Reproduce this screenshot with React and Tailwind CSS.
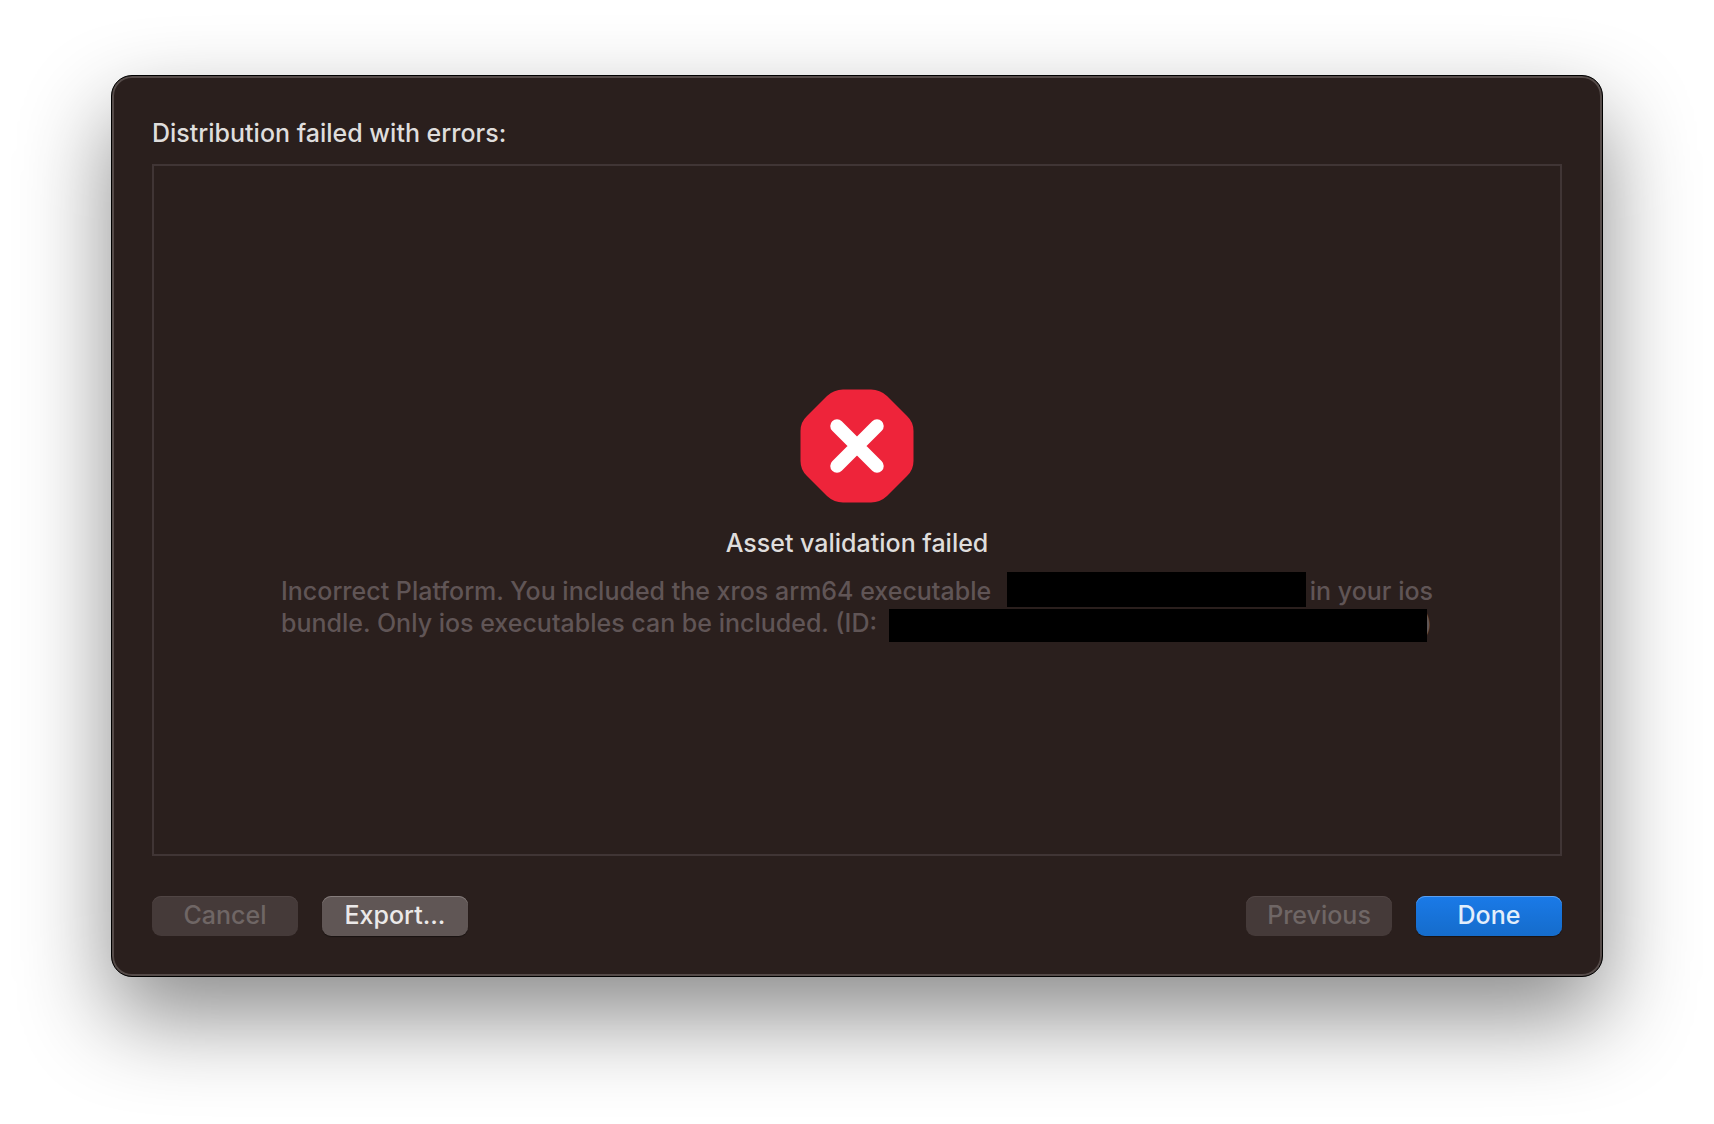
const buttonBase =
  "h-10 w-[146px] rounded-[9px] pb-[3px] text-[25px] leading-8 font-medium text-center";

function ErrorIcon() {
  return (
    <svg
      className="h-[114px] w-[114px]"
      viewBox="0 0 114 114"
      role="img"
      aria-label="Error"
    >
      <path
        fill="#ee243a"
        d="M43 0.500H71Q80 0.500 87 7L107 27Q113.500 33 113.500 42V72Q113.500 81 107 87L87 107Q80 113.500 71 113.500H43Q34 113.500 27 107L7 87Q0.500 81 0.500 72V42Q0.500 33 7 27L27 7Q34 0.500 43 0.500Z"
      />
      <path
        d="M37 37L77 77M77 37L37 77"
        stroke="#fff"
        strokeWidth="13.500"
        strokeLinecap="round"
      />
    </svg>
  );
}

export default function App() {
  return (
    <div className="flex min-h-screen flex-col bg-white px-[111px] pt-[75px] pb-[147px] font-['Inter','Liberation_Sans',sans-serif] text-[25px] leading-8 font-medium text-[#dfdddc]">
      <main className="flex flex-1 flex-col rounded-[21px] border border-black bg-[#2a1f1d] p-10 shadow-[inset_0_0_0_2px_#554b49,0_40px_90px_rgba(0,0,0,0.46)]">
        <h1 className="pt-px">Distribution failed with errors:</h1>

        <section className="mt-[15px] flex flex-1 flex-col items-center justify-center border-2 border-[#403535] px-4 pt-2">
          <ErrorIcon />
          <h2 className="mt-6">Asset validation failed</h2>
          <div className="mt-4 w-full max-w-[1152px] whitespace-nowrap text-[#605556]">
            <p className="flex h-8 items-end">
              <span>
                Incorrect Platform. You included the xros arm64 executable
              </span>
              <span className="mr-1 ml-4 h-[35px] flex-1 bg-black" />
              <span>in your ios</span>
            </p>
            <p className="flex h-8 items-start pr-px">
              <span>
                bundle. Only ios executables can be included. (ID:
              </span>
              <span className="relative mt-0.5 ml-3 h-[33px] flex-1 bg-black" />
              <span className="-ml-1">)</span>
            </p>
          </div>
        </section>

        <footer className="mt-10 flex items-center justify-between">
          <div className="flex gap-6">
            <button
              type="button"
              disabled
              className={`${buttonBase} bg-[#453a39] text-[#6f6665] shadow-[inset_0_1px_0_#504544]`}
            >
              Cancel
            </button>
            <button
              type="button"
              className={`${buttonBase} bg-[#605655] text-[#ebe9e9] shadow-[inset_0_1px_0_#857c7b,0_1px_1px_rgba(0,0,0,0.4)]`}
            >
              Export...
            </button>
          </div>
          <div className="flex gap-6">
            <button
              type="button"
              disabled
              className={`${buttonBase} bg-[#453a39] text-[#6f6665] shadow-[inset_0_1px_0_#504544]`}
            >
              Previous
            </button>
            <button
              type="button"
              className={`${buttonBase} bg-linear-to-b from-[#1a7ae8] to-[#156ccb] text-[#e3eefb] shadow-[inset_0_1px_0_#5a9ff0,0_1px_1px_rgba(0,0,0,0.4)]`}
            >
              Done
            </button>
          </div>
        </footer>
      </main>
    </div>
  );
}
